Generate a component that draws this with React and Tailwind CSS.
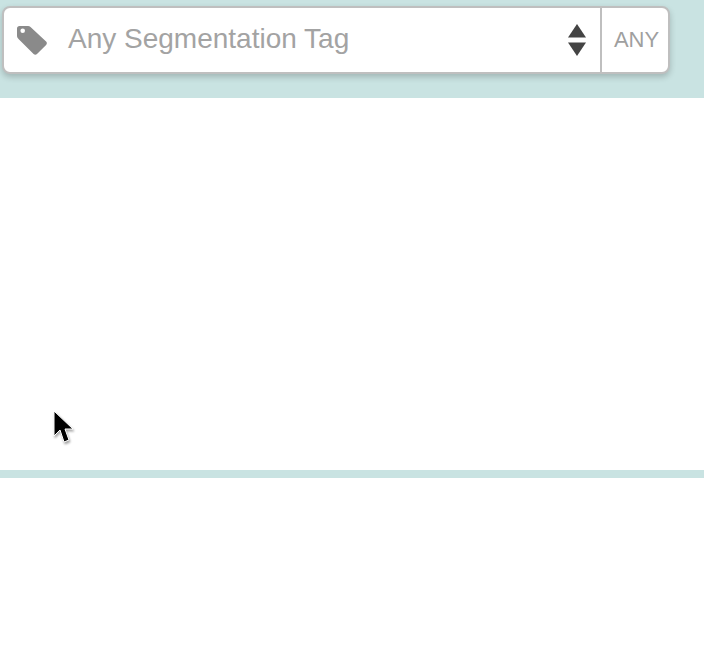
function TagIcon() {
  return (
    <svg width="32" height="32" viewBox="0 0 32 32" className="shrink-0">
      <path
        fillRule="evenodd"
        fill="#8a8a8a"
        d="M1 4.500C1 3 2 2 3.500 2H12c1 0 1.800.3 2.500 1l15.600 14.600c1 1 1 2.400 0 3.400l-9.100 9.100c-1 1-2.400 1-3.400 0L3 15.500c-1.300-1.300-2-2.300-2-4zM6.700 4.500a2.300 2.300 0 1 0 0 4.600a2.300 2.300 0 0 0 0-4.600z"
      />
    </svg>
  );
}

function SortIcon() {
  return (
    <svg width="20" height="34" viewBox="0 0 20 34" className="shrink-0">
      <path fill="#444444" d="M10 1l9 13.500H1z" />
      <path fill="#444444" d="M1 19.500h18L10 33z" />
    </svg>
  );
}

function Cursor() {
  return (
    <svg
      width="24"
      height="38"
      viewBox="0 0 24 38"
      className="absolute left-[52px] top-[410px] drop-shadow-[1px_2px_1px_rgba(0,0,0,0.35)]"
    >
      <path
        fill="#000000"
        stroke="#ffffff"
        strokeWidth="1"
        d="M2 1v25l6-6 4 12 5-2-4-11h8z"
      />
    </svg>
  );
}

export default function App() {
  return (
    <div className="relative h-[656px] w-[704px] overflow-hidden bg-white font-['Liberation_Sans',Arial,sans-serif]">
      <div className="h-[98px] bg-[#c9e3e2] pl-[2px] pt-[6px]">
        <div className="flex h-[68px] w-[668px] items-stretch rounded-[8px] border-2 border-[#bfbfbf] bg-white shadow-[0_3px_6px_rgba(0,0,0,0.2)]">
          <div className="flex flex-1 items-center pl-[12px] pr-[13px]">
            <TagIcon />
            <span className="ml-[20px] flex-1 -translate-y-px text-[28px] text-[#a3a3a3]">Any Segmentation Tag</span>
            <SortIcon />
          </div>
          <div className="flex w-[68px] -translate-y-0 items-center justify-center border-l-2 border-[#bfbfbf] pb-[2px] pl-[3px] text-[22px] text-[#9f9f9f]">
            ANY
          </div>
        </div>
      </div>
      <div className="h-[372px]" />
      <div className="h-[8px] bg-[#c9e3e2]" />
      <Cursor />
    </div>
  );
}
